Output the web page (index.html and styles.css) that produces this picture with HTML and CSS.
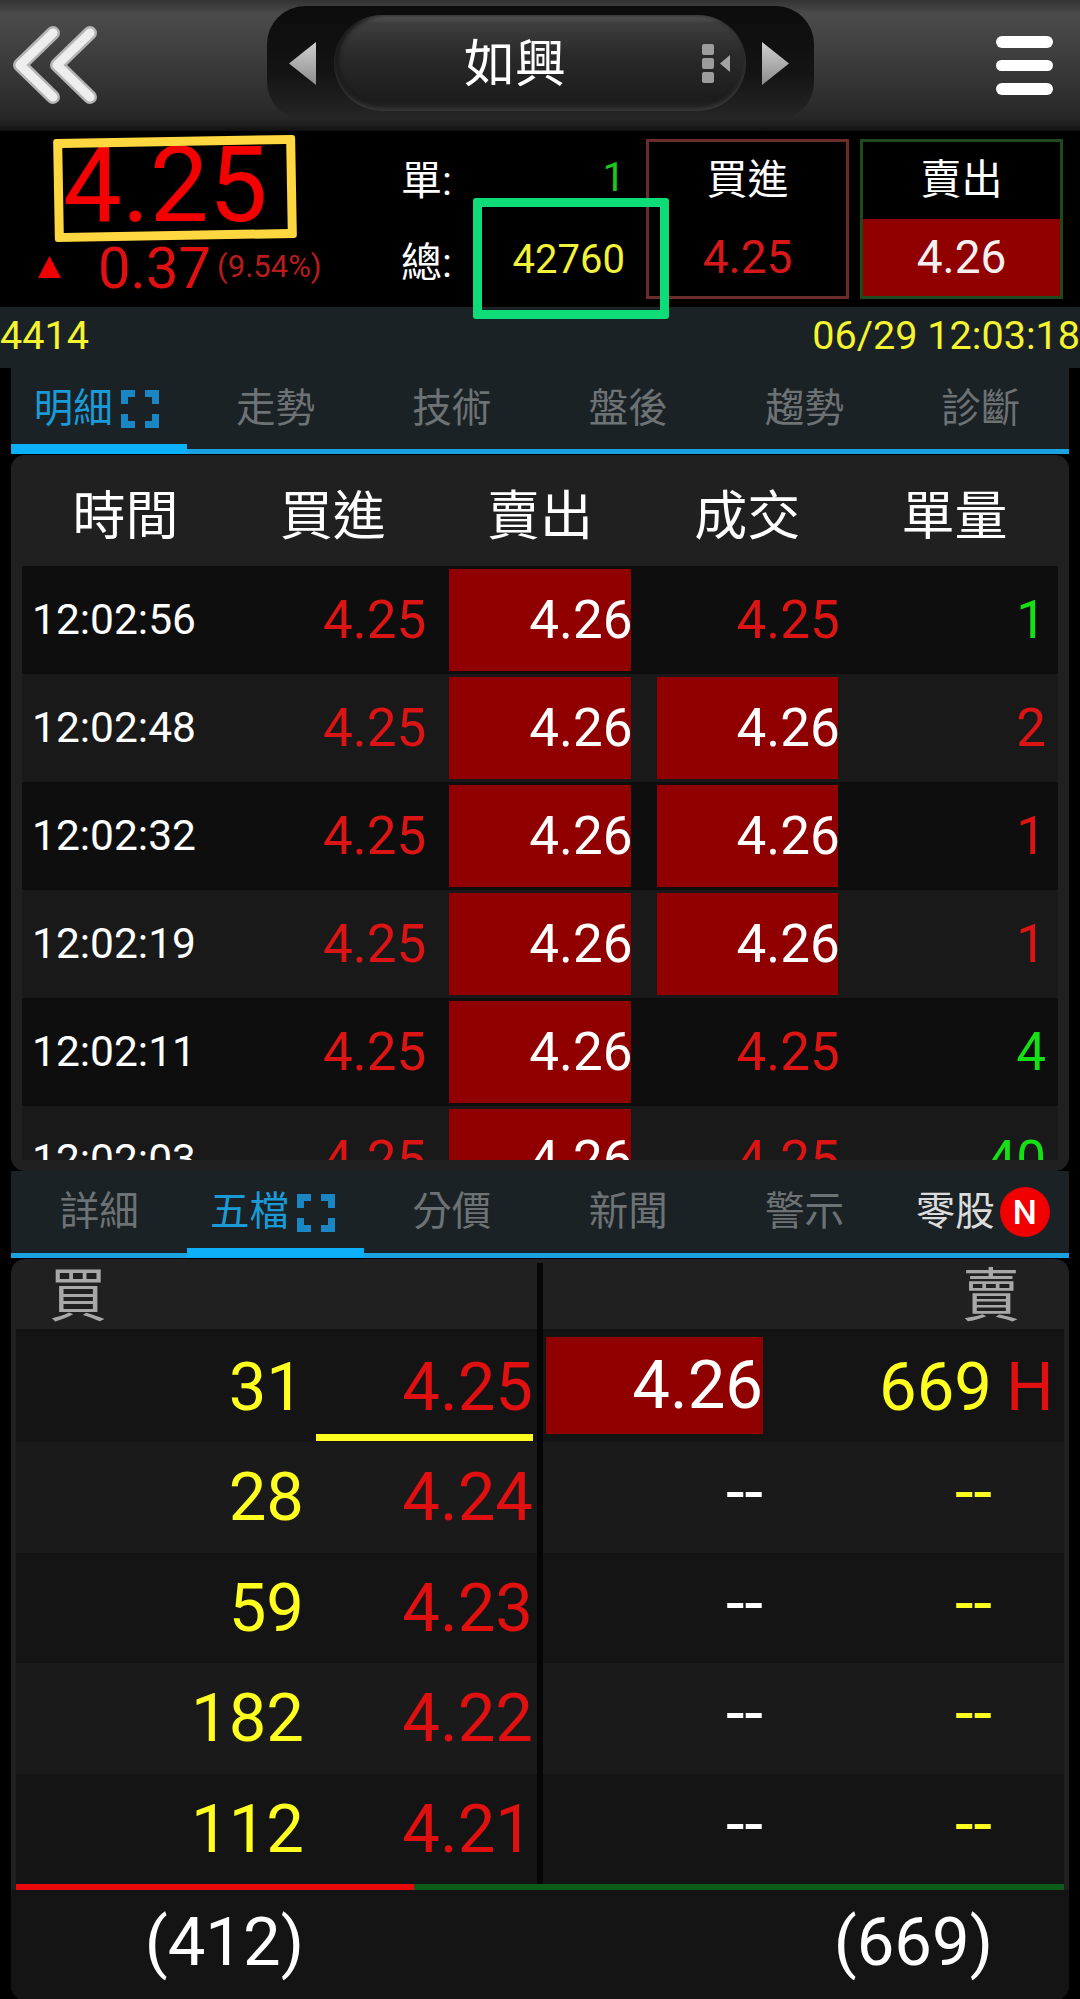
FILE: index.html
```html
<!DOCTYPE html>
<html lang="zh-Hant">
<head>
<meta charset="utf-8">
<title>如興</title>
<link rel="stylesheet" href="styles.css">
</head>
<body>
<svg class="defs" width="0" height="0" aria-hidden="true">
  <defs>
    <symbol id="fs" viewBox="0 0 38 38">
      <path d="M14 3.5H3.5V14M24 3.5H34.5V14M14 34.5H3.5V24M24 34.5H34.5V24" fill="none" stroke="currentColor" stroke-width="7"/>
    </symbol>
    <linearGradient id="tri" x1="0" y1="0" x2="0" y2="1">
      <stop offset="0" stop-color="#d0d0d0"/>
      <stop offset="1" stop-color="#8c8c8c"/>
    </linearGradient>
  </defs>
</svg>

<header class="topbar">
  <svg class="back" viewBox="0 0 100 131" aria-label="返回">
    <path d="M53 33 20 65 53 97M90 33 57 65 90 97" fill="none" stroke="#b4b4b4" stroke-width="14" stroke-linecap="round" stroke-linejoin="round"/>
    <path d="M53 33 20 65 53 97M90 33 57 65 90 97" fill="none" stroke="#eeeeee" stroke-width="9" stroke-linecap="round" stroke-linejoin="round"/>
  </svg>
  <div class="pill">
    <svg class="arrow" viewBox="0 0 27 43"><path d="M27 0V43L0 21.5Z" fill="url(#tri)"/></svg>
    <div class="pill-inner">
      <span class="title">如興</span>
      <span class="dots"><i></i><i></i><i></i></span>
      <svg class="mini-arrow" viewBox="0 0 10 17"><path d="M10 0V17L0 8.5Z" fill="#a4a4a4"/></svg>
    </div>
    <svg class="arrow" viewBox="0 0 27 43"><path d="M0 0V43L27 21.5Z" fill="url(#tri)"/></svg>
  </div>
  <div class="menu"><i></i><i></i><i></i></div>
</header>

<section class="info">
  <div class="price-col">
    <div class="last">4.25</div>
    <div class="change">
      <svg class="up" viewBox="0 0 23 22"><path d="M11.5 0 23 22H0Z" fill="#f00000"/></svg>
      <span class="chg">0.37</span>
      <span class="pct">(9.54%)</span>
    </div>
  </div>
  <div class="order-col">
    <div class="order-row"><span>單:</span><b class="green">1</b></div>
    <div class="order-row"><span>總:</span><b class="yellow">42760</b></div>
  </div>
  <div class="quote quote-buy">
    <div class="quote-label">買進</div>
    <div class="quote-value">4.25</div>
  </div>
  <div class="quote quote-sell">
    <div class="quote-label">賣出</div>
    <div class="quote-value">4.26</div>
  </div>
  <div class="mark mark-yellow"></div>
  <div class="mark mark-green"></div>
</section>

<div class="subbar"><span>4414</span><span>06/29 12:03:18</span></div>

<main class="content">
  <nav class="tabs">
    <div class="tab active">明細<svg class="fs"><use href="#fs"/></svg></div>
    <div class="tab">走勢</div>
    <div class="tab">技術</div>
    <div class="tab">盤後</div>
    <div class="tab">趨勢</div>
    <div class="tab">診斷</div>
  </nav>

  <section class="panel ticks">
    <div class="tick-head"><span>時間</span><span>買進</span><span>賣出</span><span>成交</span><span>單量</span></div>
    <div class="tick-list">
      <div class="tick"><span class="t-time">12:02:56</span><span class="t-buy">4.25</span><span class="t-cell hit">4.26</span><span class="t-cell red">4.25</span><span class="t-vol green-b">1</span></div>
      <div class="tick"><span class="t-time">12:02:48</span><span class="t-buy">4.25</span><span class="t-cell hit">4.26</span><span class="t-cell hit">4.26</span><span class="t-vol red">2</span></div>
      <div class="tick"><span class="t-time">12:02:32</span><span class="t-buy">4.25</span><span class="t-cell hit">4.26</span><span class="t-cell hit">4.26</span><span class="t-vol red">1</span></div>
      <div class="tick"><span class="t-time">12:02:19</span><span class="t-buy">4.25</span><span class="t-cell hit">4.26</span><span class="t-cell hit">4.26</span><span class="t-vol red">1</span></div>
      <div class="tick"><span class="t-time">12:02:11</span><span class="t-buy">4.25</span><span class="t-cell hit">4.26</span><span class="t-cell red">4.25</span><span class="t-vol green-b">4</span></div>
      <div class="tick"><span class="t-time">12:02:03</span><span class="t-buy">4.25</span><span class="t-cell hit">4.26</span><span class="t-cell red">4.25</span><span class="t-vol green-b">40</span></div>
    </div>
  </section>

  <nav class="tabs tabs-second">
    <div class="tab">詳細</div>
    <div class="tab active">五檔<svg class="fs"><use href="#fs"/></svg></div>
    <div class="tab">分價</div>
    <div class="tab">新聞</div>
    <div class="tab">警示</div>
    <div class="tab tab-new">零股<span class="badge">N</span></div>
  </nav>

  <section class="panel book">
    <div class="book-grid">
      <div class="book-head"><span class="side">買</span><span class="side">賣</span></div>
      <div class="level"><span class="qty">31</span><span class="bid best">4.25</span><span class="gap"></span><span class="ask hit">4.26</span><span class="qty">669</span><span class="flag">H</span></div>
      <div class="level"><span class="qty">28</span><span class="bid">4.24</span><span class="gap"></span><span class="ask dash">--</span><span class="qty dash">--</span><span class="flag"></span></div>
      <div class="level"><span class="qty">59</span><span class="bid">4.23</span><span class="gap"></span><span class="ask dash">--</span><span class="qty dash">--</span><span class="flag"></span></div>
      <div class="level"><span class="qty">182</span><span class="bid">4.22</span><span class="gap"></span><span class="ask dash">--</span><span class="qty dash">--</span><span class="flag"></span></div>
      <div class="level"><span class="qty">112</span><span class="bid">4.21</span><span class="gap"></span><span class="ask dash">--</span><span class="qty dash">--</span><span class="flag"></span></div>
    </div>
    <div class="ratio"><span class="ratio-buy" style="width:38%"></span><span class="ratio-sell"></span></div>
    <div class="totals"><span class="total-buy">(412)</span><span class="total-sell">(669)</span></div>
  </section>
</main>
</body>
</html>
```

FILE: styles.css
```css
* { box-sizing: border-box; }

html, body {
  margin: 0;
  padding: 0;
  background: #000;
}

body {
  width: 1080px;
  height: 1999px;
  overflow: hidden;
  font-family: Roboto, "Noto Sans CJK TC", sans-serif;
  color: #fff;
}

.defs { position: absolute; }

/* top bar */
.topbar {
  display: flex;
  align-items: flex-start;
  height: 131px;
  background: linear-gradient(#333 0, #4b4b4b 14px, #3c3c3c 60px, #272727 118px, #1c1c1c 126px, #101010 131px);
}

.back {
  display: block;
  flex: none;
  width: 100px;
  height: 131px;
  margin-right: 167px;
}

.pill {
  display: flex;
  align-items: center;
  flex: none;
  width: 547px;
  height: 114px;
  margin-top: 6px;
  padding-left: 22px;
  border-radius: 38px;
  background: linear-gradient(#0c0c0c, #141414 60%, #262626);
}

.arrow {
  display: block;
  flex: none;
  width: 27px;
  height: 43px;
}

.pill-inner {
  display: flex;
  align-items: center;
  flex: none;
  width: 412px;
  height: 96px;
  margin: 0 16px 0 18px;
  padding: 0 16px 0 130px;
  border-radius: 48px;
  background: linear-gradient(#5e5e5e 0, #3e3e3e 8px, #2a2a2a 40px, #1c1c1c 85px, #242424 96px);
  box-shadow: inset 0 -3px 4px #3a3a3a, inset 3px 0 5px #0e0e0e;
}

.title {
  font-size: 51px;
  line-height: 60px;
  margin-top: 4px;
}

.dots {
  display: flex;
  flex-direction: column;
  gap: 3px;
  width: 12px;
  margin-left: auto;
}

.dots i {
  display: block;
  height: 11px;
  border-radius: 2px;
  background: #9c9c9c;
}

.mini-arrow {
  display: block;
  width: 10px;
  height: 17px;
  margin-left: 6px;
}

.menu {
  display: flex;
  flex-direction: column;
  gap: 12px;
  width: 57px;
  margin: 36px 27px 0 auto;
}

.menu i {
  display: block;
  height: 11.5px;
  border-radius: 6px;
  background: #fff;
}

/* quote summary */
.info {
  position: relative;
  display: flex;
  align-items: flex-start;
  height: 176px;
  background: #000;
}

.price-col {
  flex: none;
  width: 401px;
}

.last {
  margin-top: 5px;
  padding-left: 63px;
  font-size: 105px;
  line-height: 100px;
  color: #f40000;
}

.change {
  display: flex;
  align-items: center;
  height: 60px;
  margin-top: 2px;
  padding-left: 38px;
}

.up {
  display: block;
  flex: none;
  width: 23px;
  height: 22px;
  margin-top: -2px;
}

.chg {
  margin-left: 37px;
  font-size: 58px;
  color: #e01010;
}

.pct {
  margin-left: 6px;
  margin-top: -4px;
  font-size: 31px;
  color: #b81c1c;
}

.order-col {
  flex: none;
  width: 245px;
  margin-top: 5px;
  padding-right: 21px;
}

.order-row {
  display: flex;
  align-items: center;
  justify-content: space-between;
  height: 82px;
  font-size: 41px;
}

.order-row b {
  font-weight: 400;
  font-size: 40px;
}

.green { color: #1cc81c; }
.yellow { color: #f2f23a; }
.red { color: #dc1414; }
.green-b { color: #14e014; }

.quote {
  flex: none;
  width: 203px;
  height: 160px;
  margin-top: 8px;
  border: 3px solid #6b2c2c;
  text-align: center;
}

.quote-sell {
  margin-left: 11px;
  border-color: #1e4a1e;
}

.quote-label {
  height: 77px;
  font-size: 41px;
  line-height: 76px;
}

.quote-value {
  height: 77px;
  font-size: 46px;
  line-height: 76px;
  color: #d81818;
}

.quote-sell .quote-value {
  background: #900000;
  color: #f6f0f0;
}

.mark {
  position: absolute;
  border-radius: 3px;
}

.mark-yellow {
  left: 54px;
  top: 6px;
  width: 242px;
  height: 103px;
  border: 9px solid #ffd740;
  transform: rotate(-1deg);
}

.mark-green {
  left: 473px;
  top: 67px;
  width: 196px;
  height: 121px;
  border: 9px solid #0ddc78;
  z-index: 2;
}

.subbar {
  display: flex;
  justify-content: space-between;
  height: 61px;
  background: #1b2226;
  font-size: 39.6px;
  line-height: 58px;
  color: #f4f430;
}

/* tabs */
.content { padding: 0 11px; }

.tabs {
  display: flex;
  align-items: flex-start;
  height: 86px;
  background: #1b2226;
  border-bottom: 5px solid #1aa3e0;
}

.tabs-second {
  height: 87px;
}

.tab {
  display: flex;
  justify-content: center;
  align-items: flex-start;
  flex: none;
  width: calc(100% / 6);
  height: 86px;
  font-size: 39.5px;
  line-height: 82px;
  color: #6d7274;
}

.tabs-second .tab {
  height: 87px;
  line-height: 82px;
}

.tab.active {
  padding-right: 6px;
  color: #1a9ad6;
  border-bottom: 10px solid #0cb0f8;
}

.fs {
  flex: none;
  width: 38px;
  height: 38px;
  margin: 22px 0 0 8px;
  color: #1a87c4;
}

.tabs-second .fs { margin-top: 23px; }

.tab-new {
  align-items: center;
  color: #dcdcdc;
  padding-left: 4px;
}

.tabs-second .tab-new { height: 82px; }

.badge {
  flex: none;
  width: 50px;
  height: 50px;
  margin-left: 5px;
  border-radius: 50%;
  background: #f00000;
  color: #fff;
  font-size: 34px;
  font-weight: 500;
  line-height: 50px;
  text-align: center;
}

/* panels */
.panel {
  background: #202020;
  border-radius: 14px;
  overflow: hidden;
}

.ticks {
  height: 716px;
  margin-top: 1px;
  padding: 0 11px 10px;
}

.tick-head {
  display: grid;
  grid-template-columns: repeat(5, 1fr);
  height: 111px;
  padding-top: 13px;
  font-size: 53px;
  line-height: 98px;
  text-align: center;
}

.tick-list {
  height: 594px;
  overflow: hidden;
}

.tick {
  display: grid;
  grid-template-columns: repeat(5, 1fr);
  align-items: center;
  height: 108px;
  background: #191919;
  font-size: 53px;
  line-height: 102px;
  text-align: right;
}

.tick:nth-child(odd) { background: #0e0e0e; }

.t-time {
  padding-left: 10px;
  font-size: 42.5px;
  text-align: left;
}

.t-buy {
  padding-right: 10px;
  color: #dc1414;
}

.t-cell {
  height: 102px;
  margin: 0 11px 0 13px;
}

.t-cell.hit {
  background: linear-gradient(#900000, #900000) left / calc(100% - 2px) 100% no-repeat;
}

.hit {
  background: #900000;
  color: #fff;
}

.t-vol { padding-right: 12px; }

.book {
  height: 741px;
  margin-top: 1px;
  padding: 0 5px;
}

.book-grid {
  position: relative;
}

.book-grid::after {
  content: "";
  position: absolute;
  left: 521px;
  top: 4px;
  bottom: 0;
  width: 6px;
  background: #060606;
}

.book-head {
  display: flex;
  justify-content: space-between;
  height: 73px;
  padding: 0 44px 0 33px;
  border-bottom: 3px solid #111;
}

.side {
  font-size: 58px;
  line-height: 74px;
  color: #a8a8a8;
}

.level {
  display: grid;
  grid-template-columns: 300px 217px 13px 217px 229px 72px;
  height: 110.4px;
  background: #1a1a1a;
  font-size: 67px;
  line-height: 110px;
  text-align: right;
}

.level:nth-child(even) { background: #141414; }

.qty {
  padding-right: 12px;
  color: #ffff20;
}

.level .qty:nth-of-type(5) {
  padding-right: 0;
  text-align: right;
}

.bid {
  color: #e01010;
}

.best {
  box-shadow: inset 0 -7px 0 #ffff20;
  height: 109px;
}

.ask {
  height: 97px;
  margin-top: 5px;
  line-height: 97px;
}

.ask.dash { line-height: 90px; }
.qty.dash { line-height: 100px; }

.flag {
  padding-left: 14px;
  color: #e01010;
  text-align: left;
}

.ratio {
  display: flex;
  height: 6px;
}

.ratio-buy { background: #e80808; }
.ratio-sell { flex: 1; background: #0c5c18; }

.totals {
  display: grid;
  grid-template-columns: 288px 689px;
  height: 110px;
  margin: 0 -5px;
  padding-left: 5px;
  background: #141414;
  font-size: 67px;
  line-height: 104px;
  text-align: right;
}
```
